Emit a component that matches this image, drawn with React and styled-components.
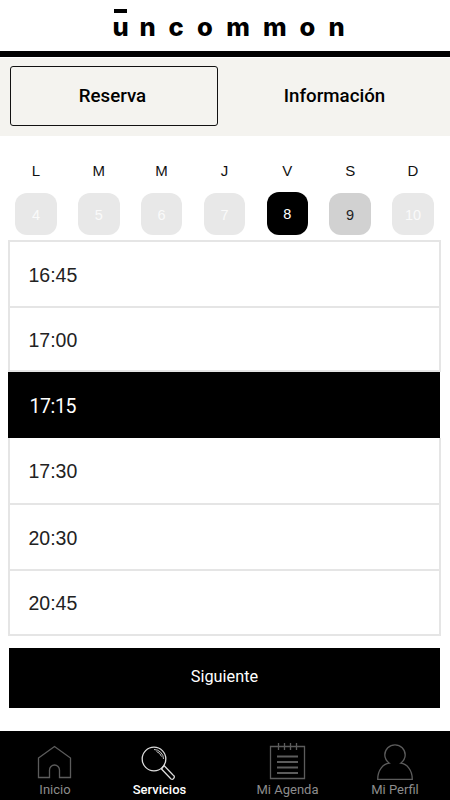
import React from "react";
import styled, { createGlobalStyle } from "styled-components";

const GlobalStyle = createGlobalStyle`
  * { box-sizing: border-box; }
  body { margin: 0; background: #fff; font-family: Roboto, sans-serif; }
  button { font: inherit; padding: 0; border: 0; background: none; color: inherit; }
`;

const Screen = styled.div`
  width: 450px;
  height: 800px;
  display: flex;
  flex-direction: column;
  overflow: hidden;
  background: #fff;
`;

const Header = styled.header`
  height: 57px;
  flex: none;
  border-bottom: 6px solid #000;
`;

const Wordmark = styled.svg`
  display: block;
  width: 450px;
  height: 51px;

  text {
    font-family: Inter, sans-serif;
    font-size: 25.5px;
    font-weight: 800;
    text-anchor: middle;
  }
`;

const Tabs = styled.div`
  height: 79px;
  flex: none;
  padding: 8px 5px 11px 10px;
  display: grid;
  grid-template-columns: 208px 1fr;
  column-gap: 6px;
  border-top: 1px solid #fff;
  background: #f4f3ef;
`;

const Tab = styled.button`
  height: 60px;
  border: ${(p) => (p.$active ? "1.5px solid #111" : "0")};
  border-radius: 3px;
  padding-bottom: ${(p) => (p.$active ? "0" : "1px")};
  padding-right: ${(p) => (p.$active ? "3px" : "0")};
  font-size: 18.7px;
  font-weight: 500;
  color: #000;
`;

const Week = styled.div`
  height: 104px;
  flex: none;
  padding: 27px 0 0 4.5px;
  display: grid;
  grid-template-columns: repeat(7, 62.85px);
  font-family: "Liberation Sans", Arial, sans-serif;
`;

const Day = styled.div`
  display: flex;
  flex-direction: column;
  align-items: center;
  font-size: 15px;
  line-height: 16px;
  color: #111;
`;

const tones = {
  off: { bg: "#e8e8e8", fg: "#fafafa" },
  on: { bg: "#000", fg: "#fff" },
  free: { bg: "#d1d1d1", fg: "#222" },
};

const DayNumber = styled.button`
  width: 41.5px;
  height: ${(p) => (p.$tone === "on" ? "43px" : "42px")};
  margin-top: ${(p) => (p.$tone === "on" ? "13px" : "14px")};
  padding-top: ${(p) => (p.$tone === "on" ? "0" : "1px")};
  border-radius: 12px;
  background: ${(p) => tones[p.$tone].bg};
  color: ${(p) => tones[p.$tone].fg};
  font-size: 14.5px;
`;

const Slots = styled.div`
  width: 433px;
  height: 396px;
  flex: none;
  margin-left: 8px;
  display: grid;
  grid-template-rows: 68px 64px 66px 67px 66px 65px;
`;

const Slot = styled.button`
  display: flex;
  align-items: center;
  text-align: left;
  padding-left: ${(p) => (p.$selected ? "21.5px" : "18.5px")};
  padding-top: ${(p) => (p.$selected ? "3px" : "2px")};
  border: 2px solid #e5e5e5;
  border-top-width: ${(p) => (p.$first ? "2px" : "0")};
  font-family: "Liberation Sans", Arial, sans-serif;
  font-size: 19.5px;
  color: #222;

  ${(p) =>
    p.$selected &&
    `
    width: 432px;
    border: 0;
    background: #000;
    color: #fff;
    font-family: Roboto, sans-serif;
    font-size: 19.5px;
    letter-spacing: -0.4px;
  `}
`;

const NextButton = styled.button`
  width: 431px;
  height: 60px;
  flex: none;
  margin: 12px 0 0 9px;
  padding: 0 0 3px;
  background: #000;
  color: #fff;
  font-size: 16.3px;
`;

const NavBar = styled.nav`
  height: 69px;
  flex: none;
  margin-top: auto;
  padding: 7px 0 0 3px;
  display: grid;
  grid-template-columns: 104px 105px 151px 64px;
  background: #000;
`;

const NavItem = styled.button`
  display: flex;
  flex-direction: column;
  align-items: center;
  justify-content: flex-start;
  color: ${(p) => (p.$active ? "#fff" : "#8c8c8c")};
  font-size: 13px;
  font-weight: ${(p) => (p.$active ? 500 : 400)};
  line-height: 16px;
  white-space: nowrap;

  svg {
    flex: none;
    width: 40px;
    height: 44px;
    fill: none;
    stroke: ${(p) => (p.$active ? "#ddd" : "#5c5c5c")};
    stroke-width: 1.3;
  }
`;

const HomeIcon = () => (
  <svg viewBox="0 0 40 44">
    <path d="M3.5 20 19.5 8.5 35.5 20v19.5H24.5V32a5 5 0 0 0-10 0v7.5H3.5Z" />
  </svg>
);

const SearchIcon = () => (
  <svg viewBox="0 0 40 44">
    <circle cx="14" cy="21" r="11.8" />
    <path d="M14 11.5A9.5 9.5 0 0 1 23.5 21M16.5 13.5a8 8 0 0 1 5 5" strokeWidth="0.9" />
    <path d="m21.5 31 9.5 10q2 1 3-1t-1-3l-9-9.5Z" />
  </svg>
);

const AgendaIcon = () => (
  <svg viewBox="0 0 40 44">
    <path d="M2.5 8.5h34v32h-34ZM10.5 5v7M16.5 5v7M22.5 5v7M28.5 5v7" />
    <path d="M9 18.5h21M9 24h21M9 29.5h21M9 35h21" strokeWidth="1.8" />
  </svg>
);

const ProfileIcon = () => (
  <svg viewBox="0 0 40 44">
    <path d="M14.3 25.2C11.5 23 9.8 20.2 9.8 17a10.2 10.2 0 0 1 20.4 0c0 3.2-1.7 6-4.5 8.2C32 26 37.3 32 37.3 41.3H2.7C2.7 32 8 26 14.3 25.2Z" />
  </svg>
);

const week = [
  ["L", 4, "off"],
  ["M", 5, "off"],
  ["M", 6, "off"],
  ["J", 7, "off"],
  ["V", 8, "on"],
  ["S", 9, "free"],
  ["D", 10, "off"],
];

const hours = ["16:45", "17:00", "17:15", "17:30", "20:30", "20:45"];

const sections = [
  ["Inicio", HomeIcon],
  ["Servicios", SearchIcon],
  ["Mi Agenda", AgendaIcon],
  ["Mi Perfil", ProfileIcon],
];

export default function App() {
  return (
    <>
      <GlobalStyle />
      <Screen>
        <Header>
          <Wordmark viewBox="0 0 450 51">
            <rect x="114" y="9" width="13" height="4" />
            <text y="36" x="120.5 147.7 176 205 238 274.8 307.5 336.5">
              uncommon
            </text>
          </Wordmark>
        </Header>
        <Tabs>
          <Tab $active>Reserva</Tab>
          <Tab>Información</Tab>
        </Tabs>
        <Week>
          {week.map(([letter, number, tone]) => (
            <Day key={number}>
              {letter}
              <DayNumber $tone={tone}>{number}</DayNumber>
            </Day>
          ))}
        </Week>
        <Slots>
          {hours.map((hour, i) => (
            <Slot key={hour} $first={i === 0} $selected={hour === "17:15"}>
              {hour}
            </Slot>
          ))}
        </Slots>
        <NextButton>Siguiente</NextButton>
        <NavBar>
          {sections.map(([label, Icon]) => (
            <NavItem key={label} $active={label === "Servicios"}>
              <Icon />
              {label}
            </NavItem>
          ))}
        </NavBar>
      </Screen>
    </>
  );
}
